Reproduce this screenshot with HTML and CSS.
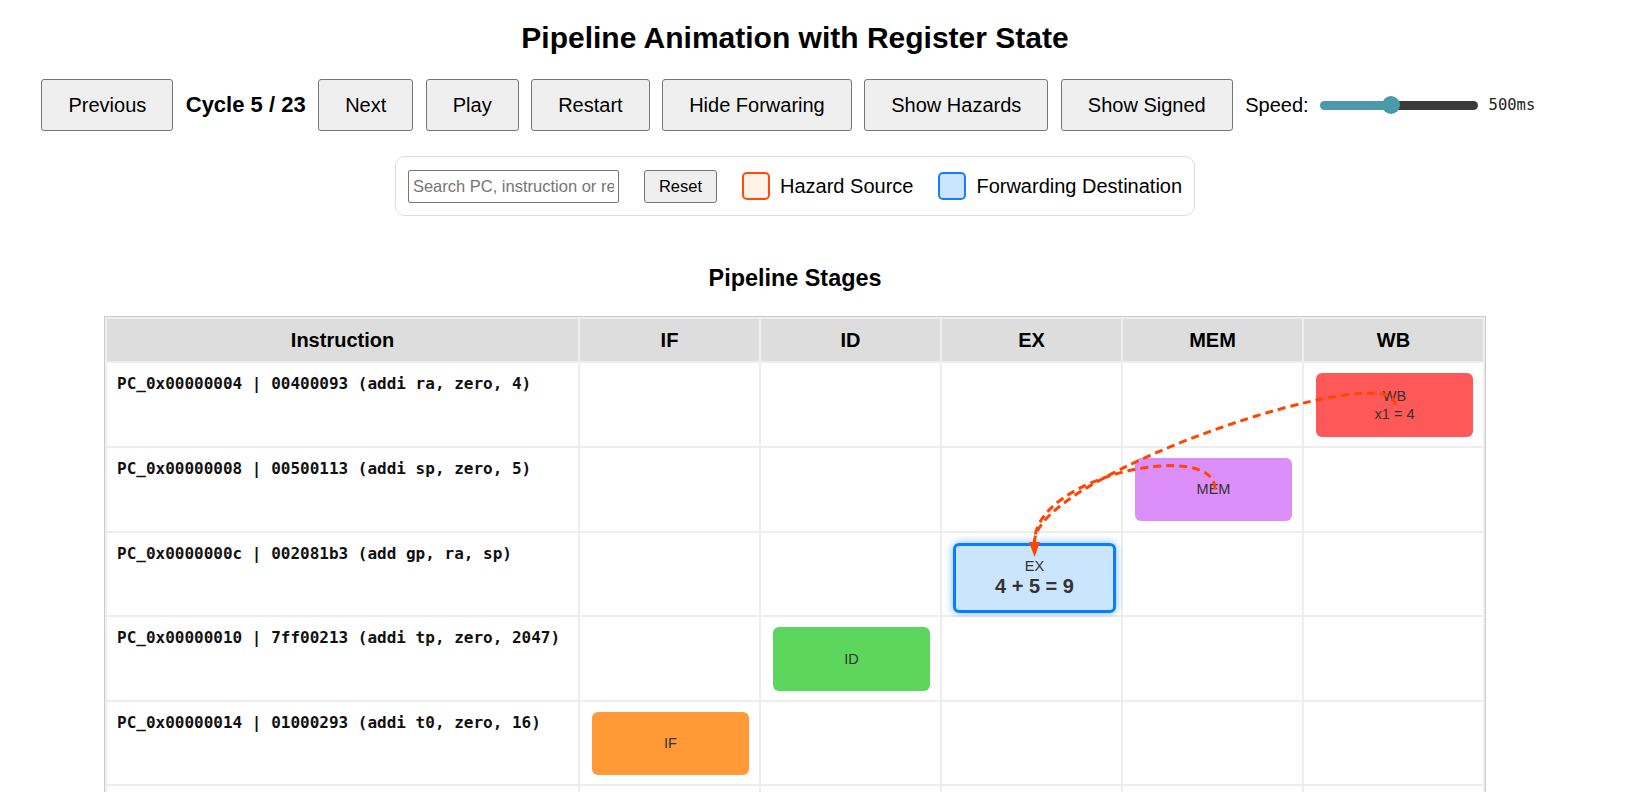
FILE: index.html
```html
<!DOCTYPE html>
<html lang="en">
<head>
<meta charset="utf-8">
<title>Pipeline Animation with Register State</title>
<link rel="stylesheet" href="styles.css">
</head>
<body>
<h1 class="title">Pipeline Animation with Register State</h1>

<div class="controls">
  <button class="btn">Previous</button>
  <span class="cycle">Cycle 5 / 23</span>
  <button class="btn">Next</button>
  <button class="btn">Play</button>
  <button class="btn">Restart</button>
  <button class="btn">Hide Forwaring</button>
  <button class="btn">Show Hazards</button>
  <button class="btn">Show Signed</button>
  <label class="speed">
    <span>Speed:</span>
    <input class="speed-range" type="range" min="100" max="1000" value="500">
    <span class="speed-value">500ms</span>
  </label>
</div>

<div class="toolbar">
  <input class="search" type="text" placeholder="Search PC, instruction or register">
  <button class="reset">Reset</button>
  <div class="legend-item"><span class="swatch swatch-hazard"></span><span>Hazard Source</span></div>
  <div class="legend-item"><span class="swatch swatch-forward"></span><span>Forwarding Destination</span></div>
</div>

<h3 class="section-title">Pipeline Stages</h3>

<div class="pipeline">
  <table class="stages">
    <thead>
      <tr>
        <th class="col-instr">Instruction</th>
        <th class="col-stage">IF</th>
        <th class="col-stage">ID</th>
        <th class="col-stage">EX</th>
        <th class="col-stage">MEM</th>
        <th class="col-stage">WB</th>
      </tr>
    </thead>
    <tbody>
      <tr class="row">
        <td class="instr">PC_0x00000004 | 00400093 (addi ra, zero, 4)</td>
        <td class="cell"></td>
        <td class="cell"></td>
        <td class="cell"></td>
        <td class="cell"></td>
        <td class="cell"><div class="stage stage-wb"><span>WB</span><span>x1 = 4</span></div></td>
      </tr>
      <tr class="row">
        <td class="instr">PC_0x00000008 | 00500113 (addi sp, zero, 5)</td>
        <td class="cell"></td>
        <td class="cell"></td>
        <td class="cell"></td>
        <td class="cell"><div class="stage stage-mem"><span>MEM</span></div></td>
        <td class="cell"></td>
      </tr>
      <tr class="row">
        <td class="instr">PC_0x0000000c | 002081b3 (add gp, ra, sp)</td>
        <td class="cell"></td>
        <td class="cell"></td>
        <td class="cell"><div class="stage stage-ex forward-dest"><span>EX</span><span class="result">4 + 5 = 9</span></div></td>
        <td class="cell"></td>
        <td class="cell"></td>
      </tr>
      <tr class="row">
        <td class="instr">PC_0x00000010 | 7ff00213 (addi tp, zero, 2047)</td>
        <td class="cell"></td>
        <td class="cell"><div class="stage stage-id"><span>ID</span></div></td>
        <td class="cell"></td>
        <td class="cell"></td>
        <td class="cell"></td>
      </tr>
      <tr class="row">
        <td class="instr">PC_0x00000014 | 01000293 (addi t0, zero, 16)</td>
        <td class="cell"><div class="stage stage-if"><span>IF</span></div></td>
        <td class="cell"></td>
        <td class="cell"></td>
        <td class="cell"></td>
        <td class="cell"></td>
      </tr>
      <tr class="row">
        <td class="instr">PC_0x00000018 | 00520333 (add t1, tp, t0)</td>
        <td class="cell"></td>
        <td class="cell"></td>
        <td class="cell"></td>
        <td class="cell"></td>
        <td class="cell"></td>
      </tr>
    </tbody>
  </table>
  <svg class="arrows" width="1382" height="560" viewBox="0 0 1382 560">
    <path class="fwd" d="M 1291.5 89 C 1291.5 39, 930.5 159, 930.5 226"/>
    <path class="fwd" d="M 1111 173 C 1111 123, 930.5 159, 930.5 226"/>
    <polygon class="fwd-head" points="925,226 936,226 930.5,241"/>
  </svg>
</div>
</body>
</html>
```

FILE: styles.css
```css
body {
  margin: 0 8px 8px;
  width: 1574px;
  font-family: "Liberation Sans", Arial, sans-serif;
  font-size: 20px;
  color: #000;
  background: #fff;
}

.title {
  font-size: 30px;
  font-weight: bold;
  text-align: center;
  margin: 0 0 24.4px;
  padding-top: 21px;
}

.controls {
  display: flex;
  justify-content: center;
  align-items: center;
  gap: 12.5px;
}

.btn {
  font-family: inherit;
  font-size: 20px;
  line-height: 22px;
  height: 52px;
  padding: 0 26px;
  color: #000;
  background: #efefef;
  border: 1px solid #767676;
  border-radius: 3px;
}

.cycle {
  font-size: 22px;
  font-weight: bold;
}

.speed {
  display: flex;
  align-items: center;
  gap: 11px;
}

.speed-range {
  -webkit-appearance: none;
  appearance: none;
  width: 158px;
  height: 9px;
  margin: 0;
  border-radius: 5px;
  background: linear-gradient(to right, #4a9aab 0 45%, #3b3b3b 45% 100%);
  outline: none;
}

.speed-range::-webkit-slider-thumb {
  -webkit-appearance: none;
  appearance: none;
  width: 18px;
  height: 18px;
  border: none;
  border-radius: 50%;
  background: #4a9aab;
}

.speed-value {
  font-family: "DejaVu Sans Mono", monospace;
  font-size: 15.5px;
  color: #222;
  min-width: 60px;
}

.toolbar {
  display: flex;
  align-items: center;
  gap: 25px;
  width: fit-content;
  margin: 25px auto 0;
  padding: 12.5px 12px;
  border: 1px solid #ddd;
  border-radius: 10px;
}

.search {
  box-sizing: border-box;
  width: 211px;
  height: 33px;
  padding: 0 4px;
  font-family: "Liberation Sans", Arial, sans-serif;
  font-size: 16.5px;
  border: 1px solid #767676;
  border-radius: 2px;
}

.search::placeholder {
  color: #757575;
}

.reset {
  box-sizing: border-box;
  height: 33px;
  padding: 0 14px;
  font-family: "Liberation Sans", Arial, sans-serif;
  font-size: 16.5px;
  color: #000;
  background: #efefef;
  border: 1px solid #767676;
  border-radius: 3px;
}

.legend-item {
  display: flex;
  align-items: center;
  gap: 10px;
}

.swatch {
  box-sizing: border-box;
  width: 28px;
  height: 28px;
  border: 2px solid;
  border-radius: 5px;
}

.swatch-hazard {
  border-color: #ff4a0f;
  background: #fff2e6;
}

.swatch-forward {
  border-color: #1a7dff;
  background: #cce5ff;
}

.section-title {
  font-size: 23.4px;
  font-weight: bold;
  text-align: center;
  margin: 49px 0 24px;
}

.pipeline {
  position: relative;
  width: 1382px;
  margin: 0 auto;
}

.stages {
  width: 1382px;
  table-layout: fixed;
  border: 1px solid #ccc;
  border-spacing: 2px;
  background: #eeeeee;
}

.stages th {
  box-sizing: border-box;
  height: 42px;
  padding: 0 10px;
  font-size: 20px;
  font-weight: bold;
  text-align: center;
  background: #dddddd;
}

.col-instr {
  width: 471px;
}

.col-stage {
  width: 179px;
}

.row {
  height: 82.6px;
}

.stages td {
  box-sizing: border-box;
  background: #fff;
  vertical-align: top;
}

.instr {
  padding: 11px 10px 0;
  font-family: "DejaVu Sans Mono", monospace;
  font-size: 16px;
  font-weight: bold;
  color: #111;
  white-space: nowrap;
}

.cell {
  padding: 10px 0 0 12px;
}

.stage {
  width: 157px;
  height: 63.5px;
  border-radius: 6px;
  display: flex;
  flex-direction: column;
  align-items: center;
  justify-content: center;
  font-size: 14.5px;
  line-height: 18.5px;
  color: #333;
}

.stage-if { background: #ff9a36; }
.stage-id { background: #5cd65c; }
.stage-mem { background: #dd8ff9; }
.stage-wb { background: #ff5858; }

.stage-ex {
  height: 64px;
  margin-left: -1px;
  background: #cce5ff;
}

.forward-dest {
  border: 3px solid #0a7cff;
  box-shadow: 0 0 8px rgba(0, 123, 255, 0.55);
}

.result {
  font-size: 20px;
  font-weight: bold;
  line-height: 23px;
}

.arrows {
  position: absolute;
  left: 0;
  top: 0;
  pointer-events: none;
  overflow: visible;
}

.fwd {
  fill: none;
  stroke: #ff4500;
  stroke-width: 3;
  stroke-dasharray: 8 5;
}

.fwd-head {
  fill: #ff4500;
}
```
